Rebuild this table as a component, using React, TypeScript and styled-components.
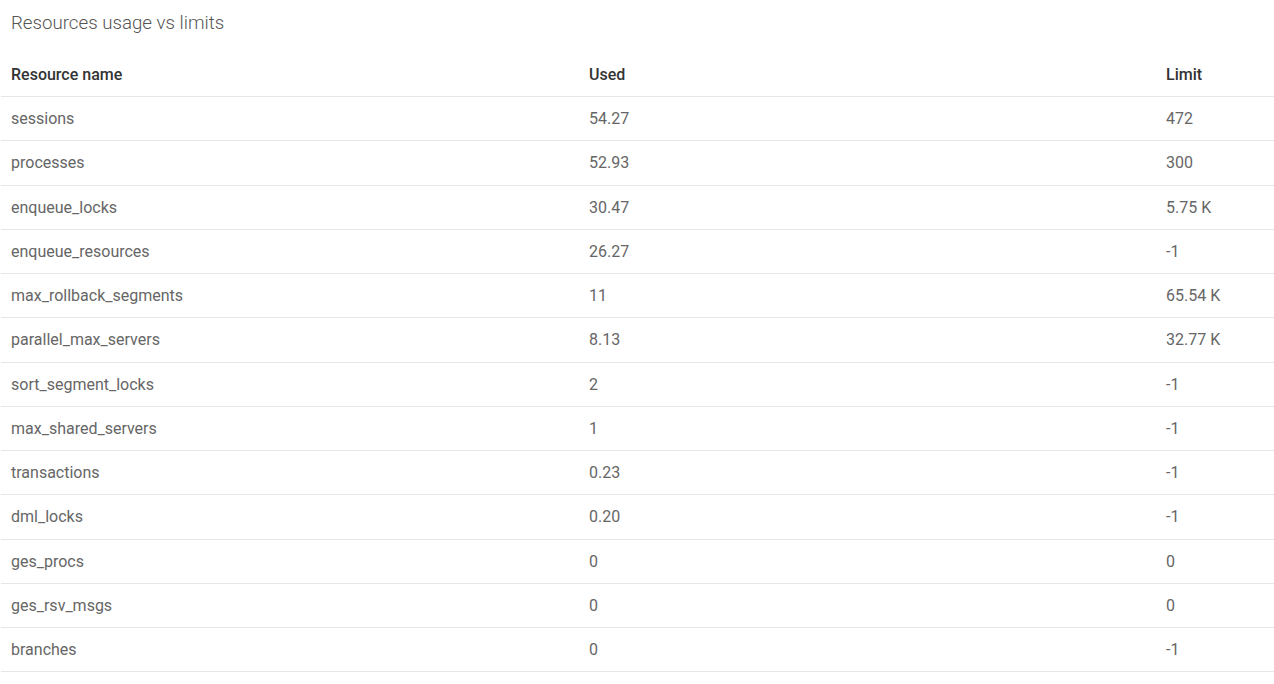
import React from "react";
import styled, { createGlobalStyle } from "styled-components";

const GlobalStyle = createGlobalStyle`
  body {
    margin: 0;
    background: #ffffff;
    font-family: Roboto, "Liberation Sans", Arial, sans-serif;
  }
`;

const Page = styled.div`
  padding: 0 0 0 1px;
`;

const Title = styled.h2`
  margin: 0;
  padding: 11px 10px 18px;
  font-size: 18.7px;
  line-height: 24px;
  font-weight: 300;
  color: #555555;
`;

const Row = styled.div<{ $head?: boolean }>`
  display: grid;
  grid-template-columns: 578px 577px 1fr;
  align-items: center;
  box-sizing: border-box;
  height: ${(p) => (p.$head ? "44px" : "44.25px")};
  border-bottom: 1px solid #e6e6e6;
  font-size: 16px;
  font-weight: ${(p) => (p.$head ? 500 : 400)};
  color: ${(p) => (p.$head ? "#333333" : "#666666")};
`;

const Cell = styled.div`
  padding: 0 10px;
  white-space: nowrap;
`;

const rows: [string, string, string][] = [
  ["sessions", "54.27", "472"],
  ["processes", "52.93", "300"],
  ["enqueue_locks", "30.47", "5.75 K"],
  ["enqueue_resources", "26.27", "-1"],
  ["max_rollback_segments", "11", "65.54 K"],
  ["parallel_max_servers", "8.13", "32.77 K"],
  ["sort_segment_locks", "2", "-1"],
  ["max_shared_servers", "1", "-1"],
  ["transactions", "0.23", "-1"],
  ["dml_locks", "0.20", "-1"],
  ["ges_procs", "0", "0"],
  ["ges_rsv_msgs", "0", "0"],
  ["branches", "0", "-1"],
];

export default function App() {
  return (
    <>
      <GlobalStyle />
      <Page>
        <Title>Resources usage vs limits</Title>
        <Row $head>
          <Cell>Resource name</Cell>
          <Cell>Used</Cell>
          <Cell>Limit</Cell>
        </Row>
        {rows.map(([name, used, limit]) => (
          <Row key={name}>
            <Cell>{name}</Cell>
            <Cell>{used}</Cell>
            <Cell>{limit}</Cell>
          </Row>
        ))}
      </Page>
    </>
  );
}
